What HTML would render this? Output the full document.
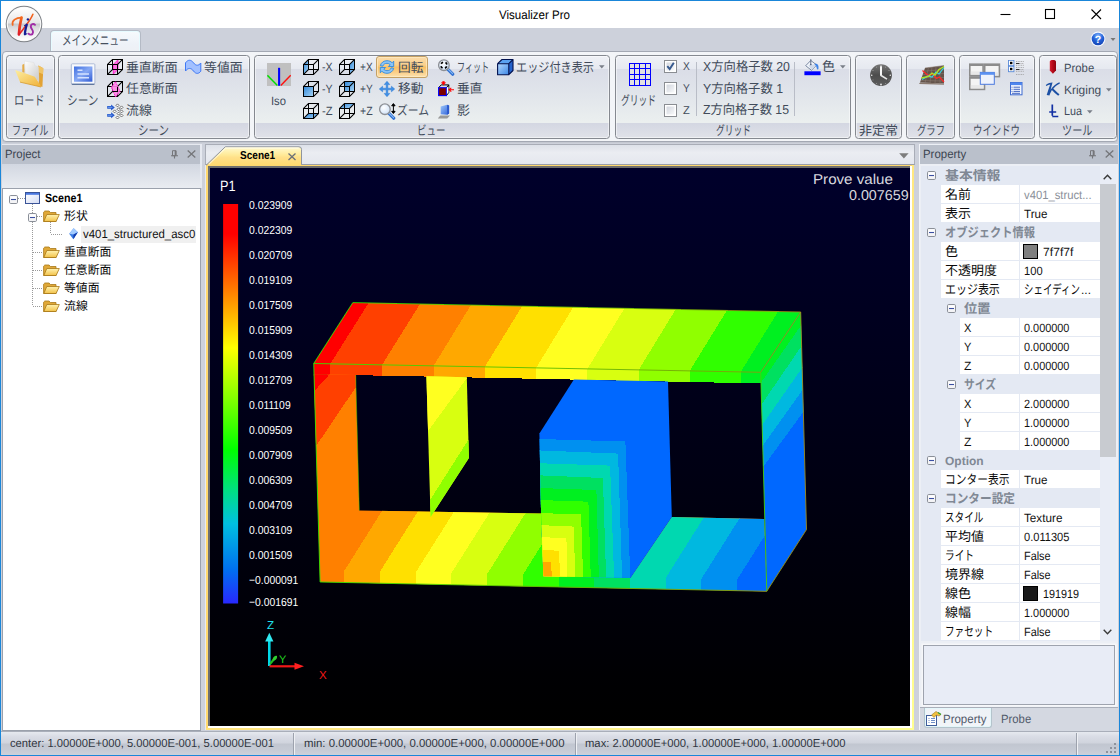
<!DOCTYPE html><html lang="ja"><head><meta charset="utf-8"><title>Visualizer Pro</title><style>
html,body{margin:0;padding:0;}
body{width:1120px;height:756px;overflow:hidden;position:relative;background:#fff;font-family:"Liberation Sans",sans-serif;font-size:12px;color:#46505e;text-rendering:geometricPrecision;-webkit-font-smoothing:antialiased;}
#win{position:absolute;left:0;top:0;width:1120px;height:756px;overflow:hidden;background:#cdd1db;}
.abs,.jt,.lt,#win div,#win svg,#win span{position:absolute;}
.lt{overflow:visible;font-family:"Liberation Sans",sans-serif;text-rendering:geometricPrecision;white-space:pre;}
.jt{overflow:visible;font-family:"Liberation Sans","Noto Sans CJK JP",sans-serif;text-rendering:geometricPrecision;white-space:pre;}

#titlebar{left:1px;top:1px;width:1118px;height:27px;background:#fff;}
#tabrow{left:1px;top:28px;width:1118px;height:24px;background:#cdd1db;}
#ribbon{left:2px;top:51px;width:1116px;height:90.500px;border:1px solid #a3a8b3;border-radius:4px;box-sizing:border-box;background:#f3f5f8;box-shadow:0 1px 0 #c4c8d1;}
.grp{top:2.700px;height:84px;border:1px solid #858990;border-radius:3.500px;box-sizing:border-box;
 background:linear-gradient(#eff1f6 0,#e6e9f0 12.500px,#dadde7 13px,#e1e5eb 38px,#ebefef 66px,#ebefef 67px,#d4d7e2 67.500px,#e1e3e9 83px);box-shadow:inset 0 0 0 1px rgba(255,255,255,.5);}
#frameborder{left:0;top:0;width:1118px;height:754px;border:1px solid #1a86d9;pointer-events:none;}
</style></head><body><div id="win"><div id="titlebar"><svg class="lt" style="left:496.40px;top:6.27px;width:75.00px;height:16.37px"><text x="2" y="12.4" font-size="12.4" fill="#000" textLength="71.00" lengthAdjust="spacingAndGlyphs">Visualizer Pro</text></svg><svg style="left:990px;top:0;width:128px;height:27px" viewBox="991 1 128 27" stroke="#000" stroke-width="1.1" fill="none"><path d="M1000.5 14.5h10"/><rect x="1045.5" y="9.5" width="9" height="9"/><path d="M1091.5 9.5l9.5 9.5M1101 9.5l-9.5 9.5"/></svg></div><div id="tabrow"><div style="left:49px;top:2px;width:91px;height:23px;box-sizing:border-box;border:1px solid #b4bac5;border-bottom:none;border-radius:4px 4px 0 0;background:linear-gradient(#f6fafd,#eef2f8 60%,#eef0f4);box-shadow:inset 0 0 0 1px #e6fbff"></div><svg class="jt" role="img" aria-label="メインメニュー" style="left:61.00px;top:4.40px;width:68.50px;height:16.90px" viewBox="0 0 68.50 16.90" fill="#46505e"><text x="0" y="13.23" font-size="13" textLength="66.5" lengthAdjust="spacingAndGlyphs">メインメニュー</text></svg><svg style="left:1088.6px;top:2.8px;width:28px;height:16px" viewBox="0 0 28 16"><defs><radialGradient id="hg" cx=".5" cy=".25" r=".8"><stop offset="0" stop-color="#7fb4ff"/><stop offset=".5" stop-color="#2462d8"/><stop offset="1" stop-color="#123fae"/></radialGradient></defs><circle cx="8" cy="8" r="7.400" fill="#f4f7fd"/><circle cx="8" cy="8" r="6.300" fill="url(#hg)"/><text x="8" y="12" font-family="Liberation Sans" font-weight="700" font-size="10.5" fill="#fff" text-anchor="middle">?</text><path d="M20.5 7h5l-2.500 3z" fill="#777"/></svg></div><div id="ribbon"><div class="grp" style="left:2.5px;width:49.2px"></div><svg class="jt" role="img" aria-label="ファイル" style="left:8.75px;top:70.00px;width:38.50px;height:16.90px" viewBox="0 0 38.50 16.90" fill="#414b5a"><text x="0" y="13.23" font-size="13" textLength="36.5" lengthAdjust="spacingAndGlyphs">ファイル</text></svg><div class="grp" style="left:55.0px;width:192.3px"></div><svg class="jt" role="img" aria-label="シーン" style="left:135.30px;top:70.00px;width:33.00px;height:16.90px" viewBox="0 0 33.00 16.90" fill="#414b5a"><text x="0" y="13.23" font-size="13" textLength="31" lengthAdjust="spacingAndGlyphs">シーン</text></svg><div class="grp" style="left:251.4px;width:355.6px"></div><svg class="jt" role="img" aria-label="ビュー" style="left:414.45px;top:70.00px;width:30.50px;height:16.90px" viewBox="0 0 30.50 16.90" fill="#414b5a"><text x="0" y="13.23" font-size="13" textLength="28.5" lengthAdjust="spacingAndGlyphs">ビュー</text></svg><div class="grp" style="left:611.6px;width:236.7px"></div><svg class="jt" role="img" aria-label="グリッド" style="left:712.60px;top:70.00px;width:37.00px;height:16.90px" viewBox="0 0 37.00 16.90" fill="#414b5a"><text x="0" y="13.23" font-size="13" textLength="35" lengthAdjust="spacingAndGlyphs">グリッド</text></svg><div class="grp" style="left:852.3px;width:47.2px"></div><svg class="jt" role="img" aria-label="非定常" style="left:856.20px;top:70.00px;width:41.00px;height:16.90px" viewBox="0 0 41.00 16.90" fill="#414b5a"><text x="0" y="12.74" font-size="13" textLength="39" lengthAdjust="spacingAndGlyphs">非定常</text></svg><div class="grp" style="left:903.3px;width:48.7px"></div><svg class="jt" role="img" aria-label="グラフ" style="left:913.50px;top:70.00px;width:30.00px;height:16.90px" viewBox="0 0 30.00 16.90" fill="#414b5a"><text x="0" y="13.23" font-size="13" textLength="28" lengthAdjust="spacingAndGlyphs">グラフ</text></svg><div class="grp" style="left:956.2px;width:75.8px"></div><svg class="jt" role="img" aria-label="ウインドウ" style="left:970.20px;top:70.00px;width:49.00px;height:16.90px" viewBox="0 0 49.00 16.90" fill="#414b5a"><text x="0" y="13.23" font-size="13" textLength="47" lengthAdjust="spacingAndGlyphs">ウインドウ</text></svg><div class="grp" style="left:1035.7px;width:78.5px"></div><svg class="jt" role="img" aria-label="ツール" style="left:1059.25px;top:70.00px;width:32.50px;height:16.90px" viewBox="0 0 32.50 16.90" fill="#414b5a"><text x="0" y="13.23" font-size="13" textLength="30.5" lengthAdjust="spacingAndGlyphs">ツール</text></svg><svg style="left:11px;top:6px;width:32px;height:32px" viewBox="0 0 32 32"><defs><linearGradient id="fo1" x1="0" y1="0" x2="1" y2="1"><stop offset="0" stop-color="#fdeea0"/><stop offset="1" stop-color="#f0b038"/></linearGradient><linearGradient id="fo2" x1="0" y1="0" x2="1" y2="1"><stop offset="0" stop-color="#ffffff"/><stop offset="1" stop-color="#c9c9c9"/></linearGradient></defs><path d="M8.300 6.700l2.200-1v9l-2.200-.500z" fill="#e4ac48"/><path d="M24.400 7.600l4.900 2.700-.9 18.700-3.600-1.300z" fill="#e2a234"/><path d="M24.400 7.600l4.900 2.700-.3 6-4.600-2z" fill="#f0c466"/><path d="M10.500 3.100l9.400 1.400 .9 3.100 3.600 1.400 .4 13.800-13.400-5.400z" fill="url(#fo2)" stroke="#d8d8d8" stroke-width=".4"/><path d="M1.100 12.100l12.100 4 7.600 2.700 5.300 8 .9 2.200-21-4.900z" fill="url(#fo1)"/><path d="M6 24.100l21 4.900" stroke="#d89a28" stroke-width=".8"/></svg><svg class="jt" role="img" aria-label="ロード" style="left:10.85px;top:39.60px;width:32.50px;height:16.90px" viewBox="0 0 32.50 16.90" fill="#414b5a"><text x="0" y="13.23" font-size="13" textLength="30.5" lengthAdjust="spacingAndGlyphs">ロード</text></svg><svg style="left:64px;top:7px;width:32px;height:32px" viewBox="0 0 32 32"><defs><linearGradient id="sc1" x1="0" y1="0" x2="1" y2="1"><stop offset="0" stop-color="#3f6fe0"/><stop offset=".5" stop-color="#86a8f4"/><stop offset="1" stop-color="#2e5ad4"/></linearGradient></defs><rect x="4.600" y="5.600" width="23" height="20.500" rx="1" fill="#34507e" opacity=".85"/><rect x="4.300" y="4.800" width="23.600" height="20" rx="1" fill="#f7f9fd" stroke="#9fb0d0" stroke-width=".8"/><rect x="7" y="7.500" width="18.400" height="15.200" fill="url(#sc1)"/><path d="M10.500 11.300h5M10.500 15h11.500M10.500 18.700h11.500" stroke="#d4e2ff" stroke-width="1.500"/></svg><svg class="jt" role="img" aria-label="シーン" style="left:63.95px;top:39.60px;width:33.50px;height:16.90px" viewBox="0 0 33.50 16.90" fill="#414b5a"><text x="0" y="13.23" font-size="13" textLength="31.5" lengthAdjust="spacingAndGlyphs">シーン</text></svg><svg style="left:104px;top:7px;width:17px;height:17px" viewBox="0 0 17 17"><path d="M6.300 5.400l4.700-4.700v9.700l-4.700 4.700z" fill="#ff74e4" stroke="#ff10c8" stroke-width=".8"/><path d="M.5 5.500h10v10h-10zM5.500 .5h10v10h-10z" fill="none" stroke="#000" stroke-width="1" shape-rendering="crispEdges"/><path d="M.6 5.400l4.800-4.800M10.600 5.400l4.800-4.800M.6 15.400l4.800-4.800M10.600 15.400l4.800-4.800" fill="none" stroke="#000" stroke-width="1.100"/></svg><svg class="jt" role="img" aria-label="垂直断面" style="left:122.70px;top:6.60px;width:53.60px;height:16.90px" viewBox="0 0 53.60 16.90" fill="#414b5a"><text x="0" y="12.74" font-size="13" textLength="51.6" lengthAdjust="spacingAndGlyphs">垂直断面</text></svg><svg style="left:104px;top:29px;width:17px;height:17px" viewBox="0 0 17 17"><path d="M.5 5.500h10v10h-10zM5.500 .5h10v10h-10z" fill="none" stroke="#000" stroke-width="1" shape-rendering="crispEdges"/><path d="M.6 5.400l4.800-4.800M10.600 5.400l4.800-4.800M.6 15.400l4.800-4.800M10.600 15.400l4.800-4.800" fill="none" stroke="#000" stroke-width="1.100"/><path d="M8.600 .8l-4.300 5.400 4.300 9.800 4.400-5.600z" fill="#ff86e6" fill-opacity=".9" stroke="#ff10c8" stroke-width=".9" stroke-dasharray="1.600 .8"/><path d="M5.500 10.500h5M10.500 5.500v5" stroke="#000" stroke-width="1" shape-rendering="crispEdges"/></svg><svg class="jt" role="img" aria-label="任意断面" style="left:122.70px;top:28.20px;width:53.60px;height:16.90px" viewBox="0 0 53.60 16.90" fill="#414b5a"><text x="0" y="12.74" font-size="13" textLength="51.6" lengthAdjust="spacingAndGlyphs">任意断面</text></svg><svg style="left:104px;top:51px;width:17px;height:17px" viewBox="0 0 17 17"><path d="M.2 3.0h3.900v-1.600l3.700 3-3.700 3v-1.600h-3.900z" fill="#2458cc"/><path d="M.9 4.300h4.500" stroke="#7eaaf2" stroke-width=".9"/><path d="M.2 10.900h3.900v-1.600l3.700 3-3.700 3v-1.600h-3.900z" fill="#2458cc"/><path d="M.9 12.200h4.500" stroke="#7eaaf2" stroke-width=".9"/><path d="M10.500 0.900l1.500 1.500-1.500 1.500-1.500-1.500z" fill="#fff" stroke="#3c3c3c" stroke-width=".7"/><path d="M14.500 2.900l1.500 1.500-1.500 1.500-1.500-1.500z" fill="#fff" stroke="#3c3c3c" stroke-width=".7"/><path d="M11.600 4.800l1.500 1.500-1.500 1.500-1.500-1.500z" fill="#fff" stroke="#3c3c3c" stroke-width=".7"/><path d="M7.600 6.900l1.500 1.500-1.500 1.500-1.500-1.500z" fill="#fff" stroke="#3c3c3c" stroke-width=".7"/><path d="M14.500 6.900l1.500 1.500-1.500 1.500-1.500-1.500z" fill="#fff" stroke="#3c3c3c" stroke-width=".7"/><path d="M11.600 9.100l1.500 1.500-1.500 1.500-1.500-1.500z" fill="#fff" stroke="#3c3c3c" stroke-width=".7"/><path d="M14.500 11.0l1.500 1.500-1.500 1.500-1.500-1.500z" fill="#fff" stroke="#3c3c3c" stroke-width=".7"/><path d="M10.500 13.0l1.500 1.500-1.500 1.500-1.500-1.500z" fill="#fff" stroke="#3c3c3c" stroke-width=".7"/></svg><svg class="jt" role="img" aria-label="流線" style="left:122.70px;top:50.20px;width:27.80px;height:16.90px" viewBox="0 0 27.80 16.90" fill="#414b5a"><text x="0" y="12.74" font-size="13" textLength="25.8" lengthAdjust="spacingAndGlyphs">流線</text></svg><svg style="left:182px;top:7px;width:17px;height:17px" viewBox="0 0 17 17"><path d="M.5 3.800c2.500-3.400 5.500-3.400 8 0s5.200 2.900 7.300 .2v8.200c-2.100 2.700-4.800 3.200-7.300-.2s-5.500-3.400-8 0z" fill="#a2c0ff" stroke="#3f78f4" stroke-width="1"/></svg><svg class="jt" role="img" aria-label="等値面" style="left:200.70px;top:6.60px;width:40.70px;height:16.90px" viewBox="0 0 40.70 16.90" fill="#414b5a"><text x="0" y="12.74" font-size="13" textLength="38.7" lengthAdjust="spacingAndGlyphs">等値面</text></svg><svg style="left:264px;top:11px;width:24px;height:23px" viewBox="0 0 24 23"><rect width="24" height="23" fill="#c0c0c0"/><path d="M.4 12.300l10 10.200" stroke="#00e000" stroke-width="1.400"/><path d="M23.700 12.300l-9.900 10.200" stroke="#ff1010" stroke-width="1.400"/><path d="M12.100 4.800v18" stroke="#0000ff" stroke-width="2.100"/></svg><svg class="lt" style="left:265.70px;top:41.33px;width:19.00px;height:15.84px"><text x="2" y="12" font-size="12" fill="#414b5a" textLength="15.00" lengthAdjust="spacingAndGlyphs">Iso</text></svg><svg style="left:300px;top:7px;width:16px;height:16px" viewBox="0 0 16 16"><defs><linearGradient id="cgmx" x1="0" y1="0" x2="1" y2="1"><stop offset="0" stop-color="#2f86d8"/><stop offset="1" stop-color="#aad6f6"/></linearGradient></defs><path d="M.5 5.500l5-5v10l-5 5z" fill="url(#cgmx)"/><path d="M.5 5.500h10v10h-10zM5.500 .5h10v10h-10z" fill="none" stroke="#000" stroke-width="1" shape-rendering="crispEdges"/><path d="M.6 5.400l4.800-4.800M10.600 5.400l4.800-4.800M.6 15.400l4.800-4.800M10.600 15.400l4.800-4.800" fill="none" stroke="#000" stroke-width="1.100"/></svg><svg class="lt" style="left:317.30px;top:7.43px;width:14.60px;height:15.84px"><text x="2" y="12" font-size="12" fill="#414b5a" textLength="10.60" lengthAdjust="spacingAndGlyphs">-X</text></svg><svg style="left:300px;top:29px;width:16px;height:16px" viewBox="0 0 16 16"><defs><linearGradient id="cgmy" x1="0" y1="0" x2="1" y2="1"><stop offset="0" stop-color="#2f86d8"/><stop offset="1" stop-color="#aad6f6"/></linearGradient></defs><path d="M.5 5.500h10v10h-10zM5.500 .5h10v10h-10z" fill="none" stroke="#000" stroke-width="1" shape-rendering="crispEdges"/><path d="M.6 5.400l4.800-4.800M10.600 5.400l4.800-4.800M.6 15.400l4.800-4.800M10.600 15.400l4.800-4.800" fill="none" stroke="#000" stroke-width="1.100"/><path d="M.5 5.500h10v10h-10z" fill="url(#cgmy)"/><path d="M.5 5.500h10v10h-10z" fill="none" stroke="#000" stroke-width="1" shape-rendering="crispEdges"/></svg><svg class="lt" style="left:317.30px;top:29.03px;width:14.60px;height:15.84px"><text x="2" y="12" font-size="12" fill="#414b5a" textLength="10.60" lengthAdjust="spacingAndGlyphs">-Y</text></svg><svg style="left:300px;top:51px;width:16px;height:16px" viewBox="0 0 16 16"><defs><linearGradient id="cgmz" x1="0" y1="0" x2="1" y2="1"><stop offset="0" stop-color="#2f86d8"/><stop offset="1" stop-color="#aad6f6"/></linearGradient></defs><path d="M.5 15.500l5-5h10l-5 5z" fill="url(#cgmz)"/><path d="M.5 5.500h10v10h-10zM5.500 .5h10v10h-10z" fill="none" stroke="#000" stroke-width="1" shape-rendering="crispEdges"/><path d="M.6 5.400l4.800-4.800M10.600 5.400l4.800-4.800M.6 15.400l4.800-4.800M10.600 15.400l4.800-4.800" fill="none" stroke="#000" stroke-width="1.100"/></svg><svg class="lt" style="left:317.30px;top:51.03px;width:14.60px;height:15.84px"><text x="2" y="12" font-size="12" fill="#414b5a" textLength="10.60" lengthAdjust="spacingAndGlyphs">-Z</text></svg><svg style="left:336px;top:7px;width:16px;height:16px" viewBox="0 0 16 16"><defs><linearGradient id="cgpx" x1="0" y1="0" x2="1" y2="1"><stop offset="0" stop-color="#2f86d8"/><stop offset="1" stop-color="#aad6f6"/></linearGradient></defs><path d="M10.500 5.500l5-5v10l-5 5z" fill="url(#cgpx)"/><path d="M.5 5.500h10v10h-10zM5.500 .5h10v10h-10z" fill="none" stroke="#000" stroke-width="1" shape-rendering="crispEdges"/><path d="M.6 5.400l4.800-4.800M10.600 5.400l4.800-4.800M.6 15.400l4.800-4.800M10.600 15.400l4.800-4.800" fill="none" stroke="#000" stroke-width="1.100"/></svg><svg class="lt" style="left:354.60px;top:7.43px;width:16.60px;height:15.84px"><text x="2" y="12" font-size="12" fill="#414b5a" textLength="12.60" lengthAdjust="spacingAndGlyphs">+X</text></svg><svg style="left:336px;top:29px;width:16px;height:16px" viewBox="0 0 16 16"><defs><linearGradient id="cgpy" x1="0" y1="0" x2="1" y2="1"><stop offset="0" stop-color="#2f86d8"/><stop offset="1" stop-color="#aad6f6"/></linearGradient></defs><path d="M5.500 .5h10v10h-10z" fill="url(#cgpy)"/><path d="M.5 5.500h10v10h-10zM5.500 .5h10v10h-10z" fill="none" stroke="#000" stroke-width="1" shape-rendering="crispEdges"/><path d="M.6 5.400l4.800-4.800M10.600 5.400l4.800-4.800M.6 15.400l4.800-4.800M10.600 15.400l4.800-4.800" fill="none" stroke="#000" stroke-width="1.100"/></svg><svg class="lt" style="left:354.60px;top:29.03px;width:16.60px;height:15.84px"><text x="2" y="12" font-size="12" fill="#414b5a" textLength="12.60" lengthAdjust="spacingAndGlyphs">+Y</text></svg><svg style="left:336px;top:51px;width:16px;height:16px" viewBox="0 0 16 16"><defs><linearGradient id="cgpz" x1="0" y1="0" x2="1" y2="1"><stop offset="0" stop-color="#2f86d8"/><stop offset="1" stop-color="#aad6f6"/></linearGradient></defs><path d="M.5 5.500l5-5h10l-5 5z" fill="url(#cgpz)"/><path d="M.5 5.500h10v10h-10zM5.500 .5h10v10h-10z" fill="none" stroke="#000" stroke-width="1" shape-rendering="crispEdges"/><path d="M.6 5.400l4.800-4.800M10.600 5.400l4.800-4.800M.6 15.400l4.800-4.800M10.600 15.400l4.800-4.800" fill="none" stroke="#000" stroke-width="1.100"/></svg><svg class="lt" style="left:354.60px;top:51.03px;width:16.60px;height:15.84px"><text x="2" y="12" font-size="12" fill="#414b5a" textLength="12.60" lengthAdjust="spacingAndGlyphs">+Z</text></svg><div style="left:373.0px;top:4.0px;width:52px;height:22px;box-sizing:border-box;border:1px solid #c4a064;border-radius:3px;background:linear-gradient(#fbdcaa,#fad08c 40%,#f9c166 52%,#fbd08a 78%,#fde2b0);box-shadow:inset 0 0 0 1px rgba(255,236,196,.7)"></div><svg style="left:376px;top:7px;width:16px;height:16px" viewBox="0 0 16 16"><path d="M1.300 6.700c.8-3.300 3.600-5 6.700-5 2.200 0 3.900 .8 5.100 2.100l1.600-1.600v5.300h-5.300l1.800-1.800c-.9-.9-1.900-1.400-3.200-1.400-2 0-3.600 1-4.300 2.900z" fill="#8cc4f6" stroke="#2f8ae0" stroke-width=".9" stroke-linejoin="round"/><path d="M14.700 9.300c-.8 3.300-3.600 5-6.700 5-2.200 0-3.900-.8-5.100-2.100l-1.600 1.600v-5.300h5.300l-1.800 1.800c.9 .9 1.900 1.400 3.200 1.400 2 0 3.600-1 4.300-2.900z" fill="#8cc4f6" stroke="#2f8ae0" stroke-width=".9" stroke-linejoin="round"/></svg><svg class="jt" role="img" aria-label="回転" style="left:394.90px;top:6.60px;width:27.40px;height:16.90px" viewBox="0 0 27.40 16.90" fill="#414b5a"><text x="0" y="12.74" font-size="13" textLength="25.4" lengthAdjust="spacingAndGlyphs">回転</text></svg><svg style="left:376px;top:29px;width:16px;height:16px" viewBox="0 0 16 16"><path d="M8 .3l2.800 3.300h-2v3.600h3.600v-2l3.300 2.800-3.300 2.800v-2h-3.600v3.600h2l-2.800 3.300-2.800-3.300h2v-3.600h-3.600v2l-3.300-2.800 3.300-2.800v2h3.600v-3.600h-2z" fill="#3f8fe6" stroke="#2a78d4" stroke-width=".5" stroke-linejoin="round"/></svg><svg class="jt" role="img" aria-label="移動" style="left:394.90px;top:28.20px;width:27.40px;height:16.90px" viewBox="0 0 27.40 16.90" fill="#414b5a"><text x="0" y="12.74" font-size="13" textLength="25.4" lengthAdjust="spacingAndGlyphs">移動</text></svg><svg style="left:376px;top:51px;width:17px;height:17px" viewBox="0 0 17 17"><defs><radialGradient id="mg" cx=".4" cy=".35" r=".7"><stop offset="0" stop-color="#ffffff"/><stop offset="1" stop-color="#cfe2f8"/></radialGradient></defs><path d="M9.700 10.200l5 5" stroke="#2f6fd0" stroke-width="3.200" stroke-linecap="round"/><path d="M10 10l4.600 4.600" stroke="#86b8f4" stroke-width="1.100" stroke-linecap="round"/><circle cx="5.900" cy="6.200" r="5.300" fill="url(#mg)" stroke="#8d9096" stroke-width="1.300"/><path d="M14.400 1.500v8M14.400 .6l-1.700 2.200h3.400zM14.400 10.500l-1.700-2.200h3.400z" stroke="#000" stroke-width="1" fill="#000"/></svg><svg class="jt" role="img" aria-label="ズーム" style="left:394.00px;top:50.20px;width:34.00px;height:16.90px" viewBox="0 0 34.00 16.90" fill="#414b5a"><text x="0" y="13.23" font-size="13" textLength="32" lengthAdjust="spacingAndGlyphs">ズーム</text></svg><svg style="left:435px;top:7px;width:17px;height:17px" viewBox="0 0 17 17"><defs><radialGradient id="mg" cx=".4" cy=".35" r=".7"><stop offset="0" stop-color="#ffffff"/><stop offset="1" stop-color="#cfe2f8"/></radialGradient></defs><path d="M9.700 10.200l5 5" stroke="#2f6fd0" stroke-width="3.200" stroke-linecap="round"/><path d="M10 10l4.600 4.600" stroke="#86b8f4" stroke-width="1.100" stroke-linecap="round"/><circle cx="5.900" cy="6.200" r="5.300" fill="url(#mg)" stroke="#8d9096" stroke-width="1.300"/><circle cx="5.900" cy="6.200" r="3.100" fill="none" stroke="#000" stroke-width="1.700" stroke-dasharray="2.400 2.470" stroke-dashoffset="-1.250"/></svg><svg class="jt" role="img" aria-label="フィット" style="left:453.50px;top:6.60px;width:34.00px;height:16.90px" viewBox="0 0 34.00 16.90" fill="#414b5a"><text x="0" y="13.23" font-size="13" textLength="32" lengthAdjust="spacingAndGlyphs">フィット</text></svg><svg style="left:435px;top:29px;width:17px;height:17px" viewBox="0 0 17 17"><path d="M3.200 3.900h7.600v7.600M.6 6.700l2.600-2.800M8.400 6.700l2.400-2.800M8.400 14.600l2.400-3.100" stroke="#000" stroke-width="1" fill="none"/><rect x=".6" y="6.700" width="7.800" height="7.900" fill="#7c0000" stroke="#0000ff" stroke-width="1.100"/><path d="M8.900 7.500l1.500-1.800v5.300l-1.500 2z" fill="#fff"/><path d="M5.500 .2v4M3.300 1.800h4.400M4 .6l3 2.400M7 .6l-3 2.400" stroke="#ff0000" stroke-width="1"/><path d="M16 8.700h-5M13.300 6.800l-2.300 1.900 2.300 1.900" stroke="#ff0000" stroke-width="1.100" fill="none"/></svg><svg class="jt" role="img" aria-label="垂直" style="left:453.50px;top:28.20px;width:27.40px;height:16.90px" viewBox="0 0 27.40 16.90" fill="#414b5a"><text x="0" y="12.74" font-size="13" textLength="25.4" lengthAdjust="spacingAndGlyphs">垂直</text></svg><svg style="left:435px;top:51px;width:17px;height:17px" viewBox="0 0 17 17"><defs><linearGradient id="sh1" x1="0" y1="0" x2="1" y2="1"><stop offset="0" stop-color="#9cc6fa"/><stop offset="1" stop-color="#2f62d8"/></linearGradient></defs><path d="M2.300 12.400h9.700l-2.800 3.100h-9.400z" fill="#8a8a8a" opacity=".85"/><path d="M2.700 3.400l6.400-1.600 2 .7v8l-2 1.200-6.400-.5z" fill="url(#sh1)"/><path d="M9.100 1.800l2 .7v8l-2 1.200z" fill="#2a58cc"/></svg><svg class="jt" role="img" aria-label="影" style="left:454.00px;top:50.20px;width:15.00px;height:16.90px" viewBox="0 0 15.00 16.90" fill="#414b5a"><text x="0" y="12.74" font-size="13" textLength="13" lengthAdjust="spacingAndGlyphs">影</text></svg><svg style="left:494px;top:7px;width:17px;height:17px" viewBox="0 0 17 17"><defs><linearGradient id="ec1" x1="0" y1="0" x2="1" y2="1"><stop offset="0" stop-color="#b6daff"/><stop offset="1" stop-color="#3a86e6"/></linearGradient></defs><path d="M.6 4.700h11.200v11h-11.200z" fill="url(#ec1)"/><path d="M.6 4.700l4.400-4.200h11l-4.200 4.200z" fill="#5aa2f2"/><path d="M11.800 4.700l4.200-4.200v11l-4.200 4.200z" fill="#2462cc"/><path d="M.6 4.700h11.200v11h-11.200zM.6 4.700l4.400-4.200h11l-4.200 4.200M16 .5v11l-4.200 4.200" fill="none" stroke="#00104e" stroke-width="1.100" stroke-linejoin="round"/></svg><svg class="jt" role="img" aria-label="エッジ付き表示" style="left:512.50px;top:6.60px;width:80.00px;height:16.90px" viewBox="0 0 80.00 16.90" fill="#414b5a"><text x="0" y="12.9" font-size="13" textLength="78" lengthAdjust="spacingAndGlyphs">エッジ付き表示</text></svg><svg style="left:596px;top:13px;width:6px;height:4px" viewBox="0 0 6 4"><path d="M0 .3h5.600L2.800 3.400z" fill="#7a7f88"/></svg><svg style="left:626px;top:11px;width:24px;height:24px" viewBox="0 0 24 24"><rect x="0" y="0" width="22" height="23" fill="#e2e2e2"/><path d="M.5 0v23M5.500 0v23M10.500 0v23M16.500 0v23M21.500 0v23M0 .5h22M0 5.500h22M0 11.500h22M0 16.500h22M0 22.500h22" stroke="#0000ff" stroke-width="1" shape-rendering="crispEdges"/></svg><svg class="jt" role="img" aria-label="グリッド" style="left:617.70px;top:39.60px;width:37.00px;height:16.90px" viewBox="0 0 37.00 16.90" fill="#414b5a"><text x="0" y="13.23" font-size="13" textLength="35" lengthAdjust="spacingAndGlyphs">グリッド</text></svg><svg style="left:661px;top:8px;width:13px;height:13px" viewBox="0 0 13 13"><defs><linearGradient id="cb1" x1="0" y1="0" x2="1" y2="1"><stop offset="0" stop-color="#d2d6de"/><stop offset="1" stop-color="#f8f9fa"/></linearGradient></defs><rect x=".5" y=".5" width="12" height="12" fill="#fff" stroke="#8a8d92"/><rect x="2.500" y="2.500" width="8" height="8" fill="url(#cb1)"/><path d="M3.300 6.200l2.400 2.900 4.100-6.300" fill="none" stroke="#36598e" stroke-width="1.900"/></svg><svg class="lt" style="left:677.70px;top:7.49px;width:10.80px;height:14.92px"><text x="2" y="11.3" font-size="11.3" fill="#414b5a" textLength="6.80" lengthAdjust="spacingAndGlyphs">X</text></svg><svg style="left:661px;top:30px;width:13px;height:13px" viewBox="0 0 13 13"><defs><linearGradient id="cb1" x1="0" y1="0" x2="1" y2="1"><stop offset="0" stop-color="#d2d6de"/><stop offset="1" stop-color="#f8f9fa"/></linearGradient></defs><rect x=".5" y=".5" width="12" height="12" fill="#fff" stroke="#8a8d92"/><rect x="2.500" y="2.500" width="8" height="8" fill="url(#cb1)"/></svg><svg class="lt" style="left:677.70px;top:29.49px;width:10.80px;height:14.92px"><text x="2" y="11.3" font-size="11.3" fill="#414b5a" textLength="6.80" lengthAdjust="spacingAndGlyphs">Y</text></svg><svg style="left:661px;top:52px;width:13px;height:13px" viewBox="0 0 13 13"><defs><linearGradient id="cb1" x1="0" y1="0" x2="1" y2="1"><stop offset="0" stop-color="#d2d6de"/><stop offset="1" stop-color="#f8f9fa"/></linearGradient></defs><rect x=".5" y=".5" width="12" height="12" fill="#fff" stroke="#8a8d92"/><rect x="2.500" y="2.500" width="8" height="8" fill="url(#cb1)"/></svg><svg class="lt" style="left:677.70px;top:51.49px;width:10.80px;height:14.92px"><text x="2" y="11.3" font-size="11.3" fill="#414b5a" textLength="6.80" lengthAdjust="spacingAndGlyphs">Z</text></svg><div style="left:693.0px;top:10.0px;width:1px;height:54px;background:#b9bdc7"></div><svg class="jt" role="img" aria-label="X方向格子数 20" style="left:700.10px;top:5.90px;width:89.00px;height:16.90px" viewBox="0 0 89.00 16.90" fill="#414b5a"><text x="0" y="12.74" font-size="13" textLength="87" lengthAdjust="spacingAndGlyphs">X方向格子数 20</text></svg><svg class="jt" role="img" aria-label="Y方向格子数 1" style="left:700.10px;top:27.80px;width:82.00px;height:16.90px" viewBox="0 0 82.00 16.90" fill="#414b5a"><text x="0" y="12.74" font-size="13" textLength="80" lengthAdjust="spacingAndGlyphs">Y方向格子数 1</text></svg><svg class="jt" role="img" aria-label="Z方向格子数 15" style="left:700.10px;top:49.20px;width:88.00px;height:16.90px" viewBox="0 0 88.00 16.90" fill="#414b5a"><text x="0" y="12.74" font-size="13" textLength="86" lengthAdjust="spacingAndGlyphs">Z方向格子数 15</text></svg><div style="left:791.3px;top:10.0px;width:1px;height:54px;background:#b9bdc7"></div><svg style="left:800.5px;top:6.5px;width:17px;height:17px" viewBox="0 0 17 17"><rect x=".4" y="12.300" width="16.200" height="3.900" fill="#0000ff"/><path d="M6.800 1.500l6 4.600-5.300 5.200-5.800-4.600z" fill="#f4f7fc" stroke="#5a6c8c" stroke-width=".8"/><path d="M4.300 5.900l6.300-.6 2.200 .8-5.300 5.200z" fill="#d0daea"/><path d="M6.800 .2v5.300" stroke="#4a5a78" stroke-width=".9"/><ellipse cx="6.800" cy="5.600" rx=".9" ry=".7" fill="#4a5a78"/><path d="M11.500 4.600c2.200 .3 3.300 1.600 3 4.900-.2 1.300-1.500 1.300-1.700 0-.3-2-.9-3.300-2.300-4z" fill="#3f84e8"/></svg><svg class="jt" role="img" aria-label="色" style="left:819.10px;top:6.40px;width:15.00px;height:16.90px" viewBox="0 0 15.00 16.90" fill="#414b5a"><text x="0" y="12.74" font-size="13" textLength="13" lengthAdjust="spacingAndGlyphs">色</text></svg><svg style="left:837px;top:13px;width:6px;height:4px" viewBox="0 0 6 4"><path d="M0 .3h5.600L2.800 3.400z" fill="#7a7f88"/></svg><svg style="left:867px;top:11.5px;width:22px;height:22.5px" viewBox="0 0 22 22.5"><defs><linearGradient id="ck1" x1="0" y1="0" x2="0" y2="1"><stop offset="0" stop-color="#767676"/><stop offset=".5" stop-color="#4c4c4c"/><stop offset="1" stop-color="#5e5e5e"/></linearGradient></defs><circle cx="11" cy="11.200" r="10.900" fill="url(#ck1)"/><path d="M11 11.800v-9.600" stroke="#fff" stroke-width="1.900"/><path d="M10.700 11.200l6.300 3.900" stroke="#e8e8e8" stroke-width="1.700"/><g fill="#e8e8e8"><circle cx="11" cy="1.900" r=".7"/><circle cx="11" cy="20.500" r=".9"/><circle cx="1.700" cy="11.200" r=".8"/><circle cx="20.300" cy="11.200" r=".8"/><circle cx="15.600" cy="3.100" r=".4"/><circle cx="19" cy="6.500" r=".4"/><circle cx="6.400" cy="3.100" r=".4"/><circle cx="3" cy="6.500" r=".4"/><circle cx="3" cy="15.900" r=".4"/><circle cx="6.400" cy="19.300" r=".4"/><circle cx="15.600" cy="19.300" r=".4"/><circle cx="19" cy="15.900" r=".4"/></g></svg><svg style="left:914.5px;top:11px;width:28px;height:24px" viewBox="0 0 28 24"><path d="M2 19.500l5-14.500 19-2.500v18z" fill="#63534a"/><path d="M2 19.500l24 1v1.300l-25-.8z" fill="#8a7a70"/><g stroke="#8c7d73" stroke-width=".5"><path d="M7 5l19-2.500M6 8.200l20-1.700M5 11.500l21-1M4 14.500h22M3 17.500l23 .5M10.500 4.500l-3.500 15.500M14 4l-2 16M18 3.500l-1 17M22 3l0 18"/></g><path d="M4.500 7.500l5.500 5 4.500-1.500 4 4.500 3-1.500 4.500 5" stroke="#ff2828" stroke-width="1.300" fill="none"/><path d="M4 16.500l6-3.500 4 1 4-5 3 2 5-6.500" stroke="#30d8e8" stroke-width="1.200" fill="none"/><path d="M3.500 15l7-1.500 3.500-3.500 3 2 4-5.500 5-3" stroke="#b4e020" stroke-width="1.300" fill="none"/></svg><svg style="left:965.5px;top:10.5px;width:32px;height:28px" viewBox="0 0 32 28"><rect x="0" y="0.4" width="14.9" height="13" fill="#8c8c8c"/><rect x="1.6" y="3" width="11.7" height="8.8" fill="#f4f4f4"/><rect x="1.6" y="8.4" width="11.7" height="3.4" fill="#e0e0e0" opacity=".6"/><rect x="14.9" y="0.4" width="16.3" height="14" fill="#8c8c8c"/><rect x="16.5" y="3" width="13.1" height="9.8" fill="#f4f4f4"/><rect x="16.5" y="9.4" width="13.1" height="3.4" fill="#e0e0e0" opacity=".6"/><rect x="0" y="13.2" width="16.3" height="14" fill="#8c8c8c"/><rect x="1.6" y="15.8" width="13.1" height="9.8" fill="#f4f4f4"/><rect x="1.6" y="22.2" width="13.1" height="3.4" fill="#e0e0e0" opacity=".6"/><rect x="11.300" y="9.400" width="14" height="11.900" fill="#eef2fc" stroke="#4a7ade" stroke-width="1"/><rect x="11.300" y="9.400" width="14" height="2.400" fill="#5c92f2"/></svg><svg style="left:1005px;top:8px;width:17px;height:16px" viewBox="0 0 17 16"><rect x=".5" y="0.3" width="5.400" height="5.400" fill="#fff" stroke="#5a8ad8" stroke-width=".9"/><rect x="2" y="1.8" width="2.400" height="2.400" fill="#000"/><path d="M8 3.500h3.500" stroke="#333" stroke-width="1"/><path d="M8 1.500h8M12.500 3.500h3.500M8 5.300h8" stroke="#9a9a9a" stroke-width=".8" stroke-dasharray="1 .7"/><rect x=".5" y="6.300" width="5.400" height="5.400" fill="#fff" stroke="#5a8ad8" stroke-width=".9"/><rect x="2" y="7.800" width="2.400" height="2.400" fill="#000"/><path d="M8 9.500h3.500" stroke="#333" stroke-width="1"/><path d="M8 7.500h8M12.500 9.500h3.500M8 11.300h8" stroke="#9a9a9a" stroke-width=".8" stroke-dasharray="1 .7"/><path d="M8 14.500h8" stroke="#9a9a9a" stroke-width=".8" stroke-dasharray="1 .7"/></svg><svg style="left:1006.5px;top:29.5px;width:13px;height:14px" viewBox="0 0 13 14"><rect x=".5" y=".5" width="11.500" height="12.300" fill="#f4f7fe" stroke="#3e6ad0" stroke-width="1"/><rect x=".5" y=".5" width="11.500" height="2.600" fill="#4f86ee"/><path d="M3.500 5.200h6.500M3.500 7.300h6.500M3.500 9.400h6.500M2 11.300h8" stroke="#2f55b8" stroke-width=".9"/><path d="M1.500 5.200h1M1.500 7.300h1M1.500 9.400h1" stroke="#2f55b8" stroke-width=".9"/></svg><svg style="left:1043px;top:7px;width:14px;height:16px" viewBox="0 0 14 16"><defs><linearGradient id="pr1" x1="0" y1="0" x2="1" y2="0"><stop offset="0" stop-color="#d42030"/><stop offset=".5" stop-color="#b40818"/><stop offset="1" stop-color="#8c0410"/></linearGradient></defs><path d="M3.800 2.800c0-1.400 1.100-1.900 3.100-1.900s3.100 .5 3.100 1.900v8.600l-3.100 3.300-3.100-3.300z" fill="url(#pr1)"/></svg><svg class="lt" style="left:1059.20px;top:7.53px;width:34.20px;height:15.84px"><text x="2" y="12" font-size="12" fill="#414b5a" textLength="30.20" lengthAdjust="spacingAndGlyphs">Probe</text></svg><svg style="left:1042px;top:29px;width:16px;height:16px" viewBox="0 0 16 16"><path d="M.8 3.900c2.500-1.600 5-2.400 6.700-2.300l-1.900 7.200c2.400-3.500 5.300-6.300 8.800-7.600l.5 1.200c-3.200 1.500-5.300 3.500-6.600 5.300 1.900 1.700 4 4 6.200 5.500l-1.300 1.600c-2.400-1.700-4.500-3.800-6.300-5.700-1 1.600-1.900 3.600-2.500 5.500l-2.700-.5c1-3.600 2.300-7.300 3.500-10.600-1.200 .2-2.600 .800-3.900 1.500z" fill="#1b4fa4"/></svg><svg class="lt" style="left:1059.20px;top:29.53px;width:41.20px;height:15.84px"><text x="2" y="12" font-size="12" fill="#414b5a" textLength="37.20" lengthAdjust="spacingAndGlyphs">Kriging</text></svg><svg style="left:1103px;top:36px;width:6px;height:4px" viewBox="0 0 6 4"><path d="M0 .3h5.600L2.800 3.400z" fill="#7a7f88"/></svg><svg style="left:1043px;top:51px;width:14px;height:16px" viewBox="0 0 14 16"><path d="M6.300 1.400v11.300M3.200 9h7M6.300 13.500h6" stroke="#1230a4" stroke-width="1.700" fill="none"/></svg><svg class="lt" style="left:1059.20px;top:51.43px;width:22.00px;height:15.84px"><text x="2" y="12" font-size="12" fill="#414b5a" textLength="18.00" lengthAdjust="spacingAndGlyphs">Lua</text></svg><svg style="left:1084px;top:58px;width:6px;height:4px" viewBox="0 0 6 4"><path d="M0 .3h5.600L2.800 3.400z" fill="#7a7f88"/></svg></div><div id="project" style="left:1px;top:144px;width:201px;height:587px"><div style="left:1px;top:0;width:200.300px;height:44px;background:#e6e9f0"></div><div style="left:1px;top:1.300px;width:197.900px;height:18.400px;background:#bac0cb"></div><svg class="lt" style="left:2.00px;top:2.13px;width:39.40px;height:15.84px"><text x="2" y="12" font-size="12" fill="#3c4450" textLength="35.40" lengthAdjust="spacingAndGlyphs">Project</text></svg><svg style="left:169.1px;top:6px;width:9px;height:9px" viewBox="0 0 9 9"><path d="M2.500 .7h3.500v5h-3.500z" fill="none" stroke="#75767a" stroke-width="1"/><path d="M5.500 .7v5" stroke="#75767a" stroke-width="1.600"/><path d="M1 5.700h7M4.500 6v2.400" stroke="#75767a" stroke-width="1.100" fill="none"/></svg><svg style="left:185.5px;top:6px;width:9px;height:8px" viewBox="0 0 9 8"><path d="M.7 .5l7.600 7M8.300 .5l-7.600 7" stroke="#75767a" stroke-width="1.300"/></svg><div style="left:1px;top:19.700px;width:197.900px;height:24.300px;background:linear-gradient(#d2d7e1,#e9ecf1)"></div><div style="left:1px;top:43.500px;width:199px;height:543px;background:#fff;border:1px solid #9ba1ac;box-sizing:border-box"></div><svg style="left:0;top:44px;width:200px;height:130px" viewBox="1 188 200 130" fill="none" stroke="#9a9a9a" stroke-width="1" stroke-dasharray="1 1" shape-rendering="crispEdges"><path d="M18 198.500h7M32.500 204v102M37 216.500h6M32.500 252.500h10M32.500 270.500h10M32.500 288.500h10M32.500 306.500h10M50.500 222v12M50.500 234.500h12"/></svg><svg style="left:8px;top:51px;width:9px;height:9px" viewBox="0 0 9 9"><rect x=".5" y=".5" width="8" height="8" rx="1.200" fill="#f4f4f6" stroke="#8a8f98"/><rect x="1.500" y="1.500" width="6" height="3" fill="#fff"/><path d="M2 4.500h5" stroke="#3b4fa2" stroke-width="1.100"/></svg><svg style="left:27px;top:69px;width:9px;height:9px" viewBox="0 0 9 9"><rect x=".5" y=".5" width="8" height="8" rx="1.200" fill="#f4f4f6" stroke="#8a8f98"/><rect x="1.500" y="1.500" width="6" height="3" fill="#fff"/><path d="M2 4.500h5" stroke="#3b4fa2" stroke-width="1.100"/></svg><svg style="left:24px;top:48px;width:15px;height:12px" viewBox="0 0 15 12"><defs><linearGradient id="tsc" x1="0" y1="0" x2="1" y2="1"><stop offset="0" stop-color="#ffffff"/><stop offset="1" stop-color="#d4dcf4"/></linearGradient></defs><rect x=".5" y=".5" width="14" height="11" fill="url(#tsc)" stroke="#3a5498"/><rect x="1" y="1" width="13" height="1.800" fill="#4a78e0"/></svg><svg class="lt" style="left:41.60px;top:45.93px;width:41.40px;height:15.84px"><text x="2" y="12" font-size="12" font-weight="700" fill="#000" textLength="37.40" lengthAdjust="spacingAndGlyphs">Scene1</text></svg><svg style="left:42px;top:65px;width:17px;height:14px" viewBox="0 0 17 14"><defs><linearGradient id="tf1" x1="0" y1="0" x2="0" y2="1"><stop offset="0" stop-color="#fff2b0"/><stop offset="1" stop-color="#f2c24a"/></linearGradient></defs><path d="M.6 12.500v-9.300l1.200-1.200h4.300l1.200 1.500h5.700v9z" fill="#e0a838" stroke="#a87818" stroke-width=".8"/><path d="M.8 12.500l3-7h12.500l-3.200 7z" fill="url(#tf1)" stroke="#a87818" stroke-width=".8" stroke-linejoin="round"/></svg><svg class="jt" role="img" aria-label="形状" style="left:62.70px;top:63.90px;width:25.80px;height:15.60px" viewBox="0 0 25.80 15.60" fill="#0a0a0a"><text x="0" y="11.76" font-size="12" textLength="23.8" lengthAdjust="spacingAndGlyphs">形状</text></svg><svg style="left:42px;top:101px;width:17px;height:14px" viewBox="0 0 17 14"><defs><linearGradient id="tf1" x1="0" y1="0" x2="0" y2="1"><stop offset="0" stop-color="#fff2b0"/><stop offset="1" stop-color="#f2c24a"/></linearGradient></defs><path d="M.6 12.500v-9.300l1.200-1.200h4.300l1.200 1.500h5.700v9z" fill="#e0a838" stroke="#a87818" stroke-width=".8"/><path d="M.8 12.500l3-7h12.500l-3.200 7z" fill="url(#tf1)" stroke="#a87818" stroke-width=".8" stroke-linejoin="round"/></svg><svg class="jt" role="img" aria-label="垂直断面" style="left:62.70px;top:99.90px;width:49.40px;height:15.60px" viewBox="0 0 49.40 15.60" fill="#0a0a0a"><text x="0" y="11.76" font-size="12" textLength="47.4" lengthAdjust="spacingAndGlyphs">垂直断面</text></svg><svg style="left:42px;top:119px;width:17px;height:14px" viewBox="0 0 17 14"><defs><linearGradient id="tf1" x1="0" y1="0" x2="0" y2="1"><stop offset="0" stop-color="#fff2b0"/><stop offset="1" stop-color="#f2c24a"/></linearGradient></defs><path d="M.6 12.500v-9.300l1.200-1.200h4.300l1.200 1.500h5.700v9z" fill="#e0a838" stroke="#a87818" stroke-width=".8"/><path d="M.8 12.500l3-7h12.500l-3.200 7z" fill="url(#tf1)" stroke="#a87818" stroke-width=".8" stroke-linejoin="round"/></svg><svg class="jt" role="img" aria-label="任意断面" style="left:62.70px;top:117.90px;width:49.40px;height:15.60px" viewBox="0 0 49.40 15.60" fill="#0a0a0a"><text x="0" y="11.76" font-size="12" textLength="47.4" lengthAdjust="spacingAndGlyphs">任意断面</text></svg><svg style="left:42px;top:137px;width:17px;height:14px" viewBox="0 0 17 14"><defs><linearGradient id="tf1" x1="0" y1="0" x2="0" y2="1"><stop offset="0" stop-color="#fff2b0"/><stop offset="1" stop-color="#f2c24a"/></linearGradient></defs><path d="M.6 12.500v-9.300l1.200-1.200h4.300l1.200 1.500h5.700v9z" fill="#e0a838" stroke="#a87818" stroke-width=".8"/><path d="M.8 12.500l3-7h12.500l-3.200 7z" fill="url(#tf1)" stroke="#a87818" stroke-width=".8" stroke-linejoin="round"/></svg><svg class="jt" role="img" aria-label="等値面" style="left:62.70px;top:135.90px;width:37.60px;height:15.60px" viewBox="0 0 37.60 15.60" fill="#0a0a0a"><text x="0" y="11.76" font-size="12" textLength="35.6" lengthAdjust="spacingAndGlyphs">等値面</text></svg><svg style="left:42px;top:155px;width:17px;height:14px" viewBox="0 0 17 14"><defs><linearGradient id="tf1" x1="0" y1="0" x2="0" y2="1"><stop offset="0" stop-color="#fff2b0"/><stop offset="1" stop-color="#f2c24a"/></linearGradient></defs><path d="M.6 12.500v-9.300l1.200-1.200h4.300l1.200 1.500h5.700v9z" fill="#e0a838" stroke="#a87818" stroke-width=".8"/><path d="M.8 12.500l3-7h12.500l-3.200 7z" fill="url(#tf1)" stroke="#a87818" stroke-width=".8" stroke-linejoin="round"/></svg><svg class="jt" role="img" aria-label="流線" style="left:62.70px;top:153.90px;width:25.80px;height:15.60px" viewBox="0 0 25.80 15.60" fill="#0a0a0a"><text x="0" y="11.76" font-size="12" textLength="23.8" lengthAdjust="spacingAndGlyphs">流線</text></svg><div style="left:80px;top:81.5px;width:115px;height:17px;background:#f0f0f0"></div><svg style="left:67.5px;top:83.5px;width:10px;height:12px" viewBox="0 0 10 12"><path d="M4.700 .2l4.100 4-4.500 7.100-4.100-5.500z" fill="#3a7ce4"/><path d="M4.700 .2l4.100 4-4.300 2.300-4.300-.7z" fill="#a4ccff"/><path d="M4.500 6.500l4.300-2.300-4.500 7.100z" fill="#143cae"/></svg><svg class="lt" style="left:79.60px;top:82.13px;width:116.30px;height:15.84px"><text x="2" y="12" font-size="12" fill="#111" textLength="112.30" lengthAdjust="spacingAndGlyphs">v401_structured_asc0</text></svg></div><div id="doctabs" style="left:205.400px;top:143.900px;width:709.600px;height:21px;background:linear-gradient(#dde1e9,#ebedf2 40%,#e4e7ee);border:1px solid #a9adb7;border-bottom-color:#9a9ea8;box-sizing:border-box"><svg style="left:692.300px;top:8.100px;width:10px;height:6px" viewBox="0 0 10 6"><path d="M.2 .2h9.400l-4.700 5.200z" fill="#7d7d7d"/></svg></div><div style="left:205.100px;top:164.800px;width:.8px;height:565.400px;background:#e8eaf0"></div><div style="left:205.800px;top:164.800px;width:708.400px;height:565.400px;background:linear-gradient(90deg,#ffe27a,#ffff90)"></div><div style="left:912px;top:164.800px;width:2.200px;height:565.400px;background:linear-gradient(#ffe880,#ffff90)"></div><div style="left:205.800px;top:164.800px;width:706.200px;height:563.200px;background:#ffd96e"></div><div style="left:208.300px;top:166.400px;width:703.700px;height:561.600px;background:#fff"></div><div style="left:208.300px;top:166.400px;width:701.600px;height:559.500px;background:#6e6e6e"></div><svg style="left:204px;top:144px;width:102px;height:24px" viewBox="204 144 102 24"><defs><linearGradient id="dt1" x1="0" y1="0" x2="0" y2="1"><stop offset="0" stop-color="#fffad0"/><stop offset=".45" stop-color="#ffe995"/><stop offset=".55" stop-color="#ffe08a"/><stop offset="1" stop-color="#ffd96e"/></linearGradient></defs><path d="M206.300 165.500L225.300 147h73.500q2.500 0 2.500 2.500V165.500z" fill="url(#dt1)"/><path d="M206.300 165.100L225.300 146.800h73.700q2.500 0 2.500 2.500V164.500" fill="none" stroke="#8f949d" stroke-width="1"/><path d="M208.800 164.500L225.700 148h73" fill="none" stroke="#fffdf0" stroke-width="1" opacity=".9"/><path d="M288.500 153.500l7 6.500M295.500 153.500l-7 6.500" stroke="#6a6f78" stroke-width="1.300"/></svg><svg class="lt" style="left:237.70px;top:147.06px;width:39.20px;height:15.18px"><text x="2" y="11.5" font-size="11.5" font-weight="700" fill="#000" textLength="35.20" lengthAdjust="spacingAndGlyphs">Scene1</text></svg><svg id="view" style="left:209.900px;top:168px;width:700px;height:557.900px" viewBox="209.9 168 700 557.9"><defs><linearGradient id="bg" x1="0" y1="0" x2="0" y2="1"><stop offset="0" stop-color="#00002b"/><stop offset=".93" stop-color="#000002"/><stop offset="1" stop-color="#000000"/></linearGradient></defs><rect x="209" y="167" width="702" height="560" fill="url(#bg)"/><g shape-rendering="crispEdges"><polygon points="313.6,363.5 352.7,302.6 368.8,302.9 330.6,363.8" fill="#ff0000"/><polygon points="330.3,363.8 368.5,302.9 420.2,304.0 382.3,364.8" fill="#ff4000"/><polygon points="382.0,364.8 419.9,304.0 471.1,305.1 433.7,365.9" fill="#ff8000"/><polygon points="433.4,365.9 470.8,305.1 522.3,306.2 485.0,366.9" fill="#ffa800"/><polygon points="484.7,366.9 522.0,306.2 573.5,307.2 536.3,367.9" fill="#ffe000"/><polygon points="536.0,367.9 573.2,307.2 624.7,308.3 587.6,368.9" fill="#ffff20"/><polygon points="587.3,368.9 624.4,308.3 675.9,309.4 638.9,369.9" fill="#d8ff10"/><polygon points="638.6,369.9 675.6,309.4 727.1,310.5 689.9,370.9" fill="#90ff00"/><polygon points="689.6,370.9 726.8,310.5 778.3,311.5 740.9,371.9" fill="#30ff00"/><polygon points="740.6,371.9 778.0,311.5 800.9,312.0 760.9,372.3" fill="#00f020"/><polygon points="313.6,363.2 330.6,363.5 330.6,374.6 313.6,374.2" fill="#ff0000"/><polygon points="330.3,363.5 382.3,364.5 382.3,375.7 330.3,374.6" fill="#ff4000"/><polygon points="382.0,364.5 433.7,365.6 433.7,376.7 382.0,375.7" fill="#ff8000"/><polygon points="433.4,365.6 485.0,366.6 485.0,377.8 433.4,376.7" fill="#ffa800"/><polygon points="484.7,366.6 536.3,367.6 536.3,378.8 484.7,377.8" fill="#ffe000"/><polygon points="536.0,367.6 587.6,368.6 587.6,379.9 536.0,378.8" fill="#ffff20"/><polygon points="587.3,368.6 638.9,369.6 638.9,381.0 587.3,379.9" fill="#d8ff10"/><polygon points="638.6,369.6 689.9,370.6 689.9,382.0 638.6,381.0" fill="#90ff00"/><polygon points="689.6,370.6 740.9,371.6 740.9,383.1 689.6,382.0" fill="#30ff00"/><polygon points="740.6,371.6 760.9,372.0 760.9,383.5 740.6,383.1" fill="#00f020"/><clipPath id="cpF"><polygon points="313.8,374.2 355.6,375.1 359.2,510.5 541.0,513.5 543.3,576.2 630.4,577.8 671.7,517.0 764.2,519.0 766.7,591.3 320.0,582.0"/></clipPath><g clip-path="url(#cpF)"><rect x="300" y="360" width="480" height="240" fill="#ff8000"/><polygon points="300.0,360.0 381.6,364.7 381.6,375.4 355.6,375.1 355.6,387.4 316.0,446.0 300.0,460.0" fill="#ff4000"/><polygon points="300.0,360.0 330.2,364.0 330.2,373.5 315.7,389.4 300.0,400.0" fill="#ff0000"/><polygon points="388.8,500.0 425.4,500.0 380.0,572.0 380.0,600.0 343.9,600.0 343.9,571.3" fill="#ffa800"/><polygon points="425.0,500.0 461.7,500.0 415.8,572.8 415.8,600.0 379.6,600.0 379.6,572.0" fill="#ffe000"/><polygon points="461.3,500.0 497.9,500.0 451.5,573.5 451.5,600.0 415.4,600.0 415.4,572.8" fill="#ffff20"/><polygon points="497.5,500.0 534.1,500.0 487.3,574.3 487.3,600.0 451.1,600.0 451.1,573.5" fill="#d8ff10"/><polygon points="533.7,500.0 570.3,500.0 523.0,575.0 523.0,600.0 486.9,600.0 486.9,574.3" fill="#90ff00"/><polygon points="569.9,500.0 606.5,500.0 558.8,575.8 558.8,600.0 522.6,600.0 522.6,575.0" fill="#30ff00"/><polygon points="606.1,500.0 642.7,500.0 594.5,576.5 594.5,600.0 558.4,600.0 558.4,575.8" fill="#00f020"/><polygon points="642.3,500.0 679.0,500.0 630.3,577.2 630.3,600.0 594.1,600.0 594.1,576.5" fill="#00e060"/><polygon points="678.6,500.0 715.2,500.0 666.0,578.0 666.0,600.0 629.9,600.0 629.9,577.2" fill="#00d8b0"/><polygon points="714.8,500.0 751.4,500.0 701.8,578.7 701.8,600.0 665.6,600.0 665.6,578.0" fill="#00b8e0"/><polygon points="751.0,500.0 787.6,500.0 737.5,579.5 737.5,600.0 701.4,600.0 701.4,578.7" fill="#0090f0"/><polygon points="787.2,500.0 900.4,500.0 900.4,580.0 900.4,600.0 737.1,600.0 737.1,579.5" fill="#0068ff"/></g><clipPath id="cpR"><polygon points="760.6,372.3 800.6,312.0 806.4,529.6 766.7,591.3"/></clipPath><g clip-path="url(#cpR)"><rect x="755" y="305" width="60" height="300" fill="#0068ff"/><polygon points="755.0,309.8 815.0,219.8 815.0,305.7 755.0,391.4" fill="#00f020"/><polygon points="755.0,391.0 815.0,305.3 815.0,326.7 755.0,414.3" fill="#00e060"/><polygon points="755.0,413.9 815.0,326.3 815.0,349.7 755.0,435.5" fill="#00d8b0"/><polygon points="755.0,435.1 815.0,349.3 815.0,372.8 755.0,456.7" fill="#00b8e0"/><polygon points="755.0,456.3 815.0,372.4 815.0,395.8 755.0,477.9" fill="#0090f0"/></g><clipPath id="cpP"><polygon points="426.3,376.3 466.7,377.2 468.8,458.1 430.5,517.0"/></clipPath><g clip-path="url(#cpP)"><rect x="420" y="370" width="60" height="150" fill="#d8ff10"/><polygon points="420.0,370.0 466.9,370.0 466.9,378.0 427.4,431.7 420.0,441.8" fill="#ffff20"/><polygon points="480.0,421.4 468.8,439.0 429.7,500.4 420.0,515.6 420.0,530.0 480.0,530.0" fill="#90ff00"/></g><clipPath id="cpB"><polygon points="573.8,379.6 667.9,381.6 671.7,517.0 630.4,577.9 543.3,576.3 541.0,513.5 539.3,433.5"/></clipPath><g clip-path="url(#cpB)"><rect x="535" y="375" width="140" height="210" fill="#0068ff"/><polygon points="535.0,438.9 625.3,441.5 630.2,578.0 630.2,590.0 535.0,590.0" fill="#0090f0"/><polygon points="535.0,450.3 618.0,453.6 622.0,578.0 622.0,590.0 535.0,590.0" fill="#00b8e0"/><polygon points="535.0,463.1 610.0,465.6 614.0,578.0 614.0,590.0 535.0,590.0" fill="#00d8b0"/><polygon points="535.0,475.2 602.8,478.0 606.0,578.0 606.0,590.0 535.0,590.0" fill="#00e060"/><polygon points="535.0,487.9 596.3,490.0 598.8,578.0 598.8,590.0 535.0,590.0" fill="#00f020"/><polygon points="535.0,499.9 588.3,501.7 590.7,578.0 590.7,590.0 535.0,590.0" fill="#30ff00"/><polygon points="535.0,512.9 581.0,514.5 583.0,578.0 583.0,590.0 535.0,590.0" fill="#90ff00"/><polygon points="535.0,524.9 573.8,526.6 575.0,578.0 575.0,590.0 535.0,590.0" fill="#d8ff10"/><polygon points="535.0,536.9 566.3,538.2 567.4,578.0 567.4,590.0 535.0,590.0" fill="#ffff20"/><polygon points="535.0,549.9 559.0,550.7 559.9,578.0 559.9,590.0 535.0,590.0" fill="#ffe000"/><polygon points="535.0,561.9 551.0,562.3 551.8,578.0 551.8,590.0 535.0,590.0" fill="#ffa800"/></g></g><linearGradient id="eg" gradientUnits="userSpaceOnUse" x1="313" y1="0" x2="806" y2="0"><stop offset="0" stop-color="#34e400"/><stop offset=".45" stop-color="#58bc00"/><stop offset=".8" stop-color="#7aa408"/><stop offset="1" stop-color="#a08c18"/></linearGradient><polygon points="313.6,363.5 352.7,302.6 800.6,312.0 760.6,372.3" stroke="url(#eg)" stroke-width="1" fill="none" stroke-opacity=".9"/><polyline points="313.6,363.5 320.0,582.0 766.7,591.3" stroke="url(#eg)" stroke-width="1" fill="none" stroke-opacity=".9"/><polyline points="766.7,591.3 760.6,372.3" stroke="#48d800" stroke-width="1" fill="none" stroke-opacity=".85"/><polyline points="800.6,312.0 806.4,529.6 766.7,591.3" stroke="url(#eg)" stroke-width="1" fill="none" stroke-opacity=".9"/><polyline points="355.6,375.1 359.2,510.5" stroke="#40d000" stroke-width=".8" fill="none" stroke-opacity=".6"/><defs><linearGradient id="lg" x1="0" y1="0" x2="0" y2="1"><stop offset="0" stop-color="#ff0000"/><stop offset=".075" stop-color="#ff0000"/><stop offset=".22" stop-color="#ff8000"/><stop offset=".36" stop-color="#ffff00"/><stop offset=".49" stop-color="#80ff00"/><stop offset=".615" stop-color="#00ff00"/><stop offset=".715" stop-color="#00e080"/><stop offset=".80" stop-color="#00c0e0"/><stop offset=".915" stop-color="#0070f0"/><stop offset="1" stop-color="#2828ff"/></linearGradient></defs><rect x="223" y="204" width="15" height="399.5" fill="url(#lg)"/></svg><svg class="lt" style="left:246.80px;top:197.16px;width:47.17px;height:15.18px"><text x="2" y="11.5" font-size="11.5" fill="#fff" textLength="43.17" lengthAdjust="spacingAndGlyphs">0.023909</text></svg><svg class="lt" style="left:246.80px;top:222.16px;width:47.17px;height:15.18px"><text x="2" y="11.5" font-size="11.5" fill="#fff" textLength="43.17" lengthAdjust="spacingAndGlyphs">0.022309</text></svg><svg class="lt" style="left:246.80px;top:247.16px;width:47.17px;height:15.18px"><text x="2" y="11.5" font-size="11.5" fill="#fff" textLength="43.17" lengthAdjust="spacingAndGlyphs">0.020709</text></svg><svg class="lt" style="left:246.80px;top:272.16px;width:47.17px;height:15.18px"><text x="2" y="11.5" font-size="11.5" fill="#fff" textLength="43.17" lengthAdjust="spacingAndGlyphs">0.019109</text></svg><svg class="lt" style="left:246.80px;top:297.16px;width:47.17px;height:15.18px"><text x="2" y="11.5" font-size="11.5" fill="#fff" textLength="43.17" lengthAdjust="spacingAndGlyphs">0.017509</text></svg><svg class="lt" style="left:246.80px;top:322.16px;width:47.17px;height:15.18px"><text x="2" y="11.5" font-size="11.5" fill="#fff" textLength="43.17" lengthAdjust="spacingAndGlyphs">0.015909</text></svg><svg class="lt" style="left:246.80px;top:347.16px;width:47.17px;height:15.18px"><text x="2" y="11.5" font-size="11.5" fill="#fff" textLength="43.17" lengthAdjust="spacingAndGlyphs">0.014309</text></svg><svg class="lt" style="left:246.80px;top:372.16px;width:47.17px;height:15.18px"><text x="2" y="11.5" font-size="11.5" fill="#fff" textLength="43.17" lengthAdjust="spacingAndGlyphs">0.012709</text></svg><svg class="lt" style="left:246.80px;top:397.16px;width:45.64px;height:15.18px"><text x="2" y="11.5" font-size="11.5" fill="#fff" textLength="41.64" lengthAdjust="spacingAndGlyphs">0.011109</text></svg><svg class="lt" style="left:246.80px;top:422.16px;width:47.17px;height:15.18px"><text x="2" y="11.5" font-size="11.5" fill="#fff" textLength="43.17" lengthAdjust="spacingAndGlyphs">0.009509</text></svg><svg class="lt" style="left:246.80px;top:447.16px;width:47.17px;height:15.18px"><text x="2" y="11.5" font-size="11.5" fill="#fff" textLength="43.17" lengthAdjust="spacingAndGlyphs">0.007909</text></svg><svg class="lt" style="left:246.80px;top:472.16px;width:47.17px;height:15.18px"><text x="2" y="11.5" font-size="11.5" fill="#fff" textLength="43.17" lengthAdjust="spacingAndGlyphs">0.006309</text></svg><svg class="lt" style="left:246.80px;top:497.16px;width:47.17px;height:15.18px"><text x="2" y="11.5" font-size="11.5" fill="#fff" textLength="43.17" lengthAdjust="spacingAndGlyphs">0.004709</text></svg><svg class="lt" style="left:246.80px;top:522.16px;width:47.17px;height:15.18px"><text x="2" y="11.5" font-size="11.5" fill="#fff" textLength="43.17" lengthAdjust="spacingAndGlyphs">0.003109</text></svg><svg class="lt" style="left:246.80px;top:547.16px;width:47.17px;height:15.18px"><text x="2" y="11.5" font-size="11.5" fill="#fff" textLength="43.17" lengthAdjust="spacingAndGlyphs">0.001509</text></svg><svg class="lt" style="left:246.80px;top:572.16px;width:53.22px;height:15.18px"><text x="2" y="11.5" font-size="11.5" fill="#fff" textLength="49.22" lengthAdjust="spacingAndGlyphs">−0.000091</text></svg><svg class="lt" style="left:246.80px;top:594.16px;width:53.22px;height:15.18px"><text x="2" y="11.5" font-size="11.5" fill="#fff" textLength="49.22" lengthAdjust="spacingAndGlyphs">−0.001691</text></svg><svg class="lt" style="left:218.20px;top:175.76px;width:19.60px;height:19.80px"><text x="2" y="15" font-size="15" fill="#fff" textLength="15.60" lengthAdjust="spacingAndGlyphs">P1</text></svg><svg class="lt" style="left:811.38px;top:170.02px;width:83.92px;height:18.88px"><text x="2" y="14.3" font-size="14.3" fill="rgba(255,255,255,.86)" textLength="79.92" lengthAdjust="spacingAndGlyphs">Prove value</text></svg><svg class="lt" style="left:846.66px;top:186.32px;width:63.64px;height:18.88px"><text x="2" y="14.3" font-size="14.3" fill="rgba(255,255,255,.86)" textLength="59.64" lengthAdjust="spacingAndGlyphs">0.007659</text></svg><svg style="left:255px;top:615px;width:80px;height:70px" viewBox="255 615 80 70"><path d="M269.3 666V640" stroke="#00d8e8" stroke-width="2.6"/><path d="M265.2 641.5l4.100-8.800 4.100 8.800z" fill="#30e8f0"/><path d="M269.5 666.3h26" stroke="#f01818" stroke-width="2.2"/><path d="M294.5 662.8l9.500 3.500-9.500 3.500z" fill="#ff2020"/><path d="M270 664l5-6" stroke="#20c020" stroke-width="2"/><path d="M272.5 660.5c0-3 2-5.500 4.500-4.500c0.500 3-2 5-4.500 4.500z" fill="#30d030"/></svg><svg class="lt" style="left:265.30px;top:616.96px;width:11.03px;height:15.18px"><text x="2" y="11.5" font-size="11.5" fill="#20e0f0" textLength="7.03" lengthAdjust="spacingAndGlyphs">Z</text></svg><svg class="lt" style="left:277.30px;top:652.08px;width:11.34px;height:14.52px"><text x="2" y="11" font-size="11" fill="#20d020" textLength="7.34" lengthAdjust="spacingAndGlyphs">Y</text></svg><svg class="lt" style="left:316.50px;top:667.16px;width:11.67px;height:15.18px"><text x="2" y="11.5" font-size="11.5" fill="#f01818" textLength="7.67" lengthAdjust="spacingAndGlyphs">X</text></svg><div id="prop" style="left:919px;top:144px;width:199px;height:586px;background:#eceff5"><div style="left:0;top:0;width:1px;height:586px;background:#f2f4f8"></div><div style="left:1px;top:1.300px;width:197.500px;height:18.400px;background:#bac0cb"></div><svg class="lt" style="left:2.00px;top:2.03px;width:47.20px;height:15.84px"><text x="2" y="12" font-size="12" fill="#3c4450" textLength="43.20" lengthAdjust="spacingAndGlyphs">Property</text></svg><svg style="left:168.8px;top:6px;width:9px;height:9px" viewBox="0 0 9 9"><path d="M2.500 .7h3.500v5h-3.500z" fill="none" stroke="#75767a" stroke-width="1"/><path d="M5.500 .7v5" stroke="#75767a" stroke-width="1.600"/><path d="M1 5.700h7M4.500 6v2.400" stroke="#75767a" stroke-width="1.100" fill="none"/></svg><svg style="left:185.5px;top:6px;width:9px;height:8px" viewBox="0 0 9 8"><path d="M.7 .5l7.600 7M8.300 .5l-7.600 7" stroke="#75767a" stroke-width="1.300"/></svg><div style="left:1.5px;top:22.4px;width:179.5px;height:475px;background:#e4e9f3"></div><svg style="left:8px;top:27.4px;width:9px;height:9px" viewBox="0 0 9 9"><rect x=".5" y=".5" width="8" height="8" rx="1.200" fill="#f4f4f6" stroke="#8a8f98"/><rect x="1.500" y="1.500" width="6" height="3" fill="#fff"/><path d="M2 4.500h5" stroke="#3b4fa2" stroke-width="1.100"/></svg><svg class="jt" role="img" aria-label="基本情報" style="left:25.50px;top:23.30px;width:57.50px;height:16.90px" viewBox="0 0 57.50 16.90" fill="#808894"><text x="0" y="12.74" font-size="13" font-weight="700" textLength="55.5" lengthAdjust="spacingAndGlyphs">基本情報</text></svg><div style="left:22.3px;top:41.4px;width:77.9px;height:18px;background:#fff"></div><div style="left:101.3px;top:41.4px;width:79.7px;height:18px;background:#fff"></div><svg class="jt" role="img" aria-label="名前" style="left:25.50px;top:42.30px;width:28.00px;height:16.90px" viewBox="0 0 28.00 16.90" fill="#0a0a0a"><text x="0" y="12.74" font-size="13" textLength="26" lengthAdjust="spacingAndGlyphs">名前</text></svg><svg class="lt" style="left:103.10px;top:43.23px;width:71.60px;height:15.84px"><text x="2" y="12" font-size="12" fill="#8a9099" textLength="67.60" lengthAdjust="spacingAndGlyphs">v401_struct...</text></svg><div style="left:22.3px;top:60.4px;width:77.9px;height:18px;background:#fff"></div><div style="left:101.3px;top:60.4px;width:79.7px;height:18px;background:#fff"></div><svg class="jt" role="img" aria-label="表示" style="left:25.50px;top:61.30px;width:28.00px;height:16.90px" viewBox="0 0 28.00 16.90" fill="#0a0a0a"><text x="0" y="12.74" font-size="13" textLength="26" lengthAdjust="spacingAndGlyphs">表示</text></svg><svg class="lt" style="left:103.10px;top:62.23px;width:27.40px;height:15.84px"><text x="2" y="12" font-size="12" fill="#111" textLength="23.40" lengthAdjust="spacingAndGlyphs">True</text></svg><svg style="left:8px;top:84.4px;width:9px;height:9px" viewBox="0 0 9 9"><rect x=".5" y=".5" width="8" height="8" rx="1.200" fill="#f4f4f6" stroke="#8a8f98"/><rect x="1.500" y="1.500" width="6" height="3" fill="#fff"/><path d="M2 4.500h5" stroke="#3b4fa2" stroke-width="1.100"/></svg><svg class="jt" role="img" aria-label="オブジェクト情報" style="left:25.50px;top:80.30px;width:92.00px;height:16.90px" viewBox="0 0 92.00 16.90" fill="#808894"><text x="0" y="12.9" font-size="13" font-weight="700" textLength="90" lengthAdjust="spacingAndGlyphs">オブジェクト情報</text></svg><div style="left:22.3px;top:98.4px;width:77.9px;height:18px;background:#fff"></div><div style="left:101.3px;top:98.4px;width:79.7px;height:18px;background:#fff"></div><svg class="jt" role="img" aria-label="色" style="left:25.50px;top:99.30px;width:15.00px;height:16.90px" viewBox="0 0 15.00 16.90" fill="#0a0a0a"><text x="0" y="12.74" font-size="13" textLength="13" lengthAdjust="spacingAndGlyphs">色</text></svg><div style="left:103.5px;top:99.9px;width:15px;height:15px;box-sizing:border-box;border:1px solid #000;background:#7f7f7f"></div><svg class="lt" style="left:122.30px;top:100.23px;width:34.40px;height:15.84px"><text x="2" y="12" font-size="12" fill="#111" textLength="30.40" lengthAdjust="spacingAndGlyphs">7f7f7f</text></svg><div style="left:22.3px;top:117.4px;width:77.9px;height:18px;background:#fff"></div><div style="left:101.3px;top:117.4px;width:79.7px;height:18px;background:#fff"></div><svg class="jt" role="img" aria-label="不透明度" style="left:25.50px;top:118.30px;width:54.00px;height:16.90px" viewBox="0 0 54.00 16.90" fill="#0a0a0a"><text x="0" y="12.74" font-size="13" textLength="52" lengthAdjust="spacingAndGlyphs">不透明度</text></svg><svg class="lt" style="left:103.10px;top:119.23px;width:22.60px;height:15.84px"><text x="2" y="12" font-size="12" fill="#111" textLength="18.60" lengthAdjust="spacingAndGlyphs">100</text></svg><div style="left:22.3px;top:136.4px;width:77.9px;height:18px;background:#fff"></div><div style="left:101.3px;top:136.4px;width:79.7px;height:18px;background:#fff"></div><svg class="jt" role="img" aria-label="エッジ表示" style="left:25.50px;top:137.30px;width:56.86px;height:16.90px" viewBox="0 0 56.86 16.90" fill="#0a0a0a"><text x="0" y="12.9" font-size="13" textLength="54.86" lengthAdjust="spacingAndGlyphs">エッジ表示</text></svg><svg class="jt" role="img" aria-label="シェイディン" style="left:104.80px;top:137.30px;width:58.00px;height:16.90px" viewBox="0 0 58.00 16.90" fill="#0a0a0a"><text x="0" y="13.23" font-size="13" textLength="56" lengthAdjust="spacingAndGlyphs">シェイディン</text></svg><svg class="lt" style="left:159.50px;top:138.23px;width:14.00px;height:15.84px"><text x="2" y="12" font-size="12" fill="#111" textLength="10.00" lengthAdjust="spacingAndGlyphs">...</text></svg><svg style="left:27.5px;top:160.4px;width:9px;height:9px" viewBox="0 0 9 9"><rect x=".5" y=".5" width="8" height="8" rx="1.200" fill="#f4f4f6" stroke="#8a8f98"/><rect x="1.500" y="1.500" width="6" height="3" fill="#fff"/><path d="M2 4.500h5" stroke="#3b4fa2" stroke-width="1.100"/></svg><svg class="jt" role="img" aria-label="位置" style="left:44.50px;top:156.30px;width:28.50px;height:16.90px" viewBox="0 0 28.50 16.90" fill="#808894"><text x="0" y="12.74" font-size="13" font-weight="700" textLength="26.5" lengthAdjust="spacingAndGlyphs">位置</text></svg><div style="left:41px;top:174.4px;width:59.2px;height:18px;background:#fff"></div><div style="left:101.3px;top:174.4px;width:79.7px;height:18px;background:#fff"></div><svg class="lt" style="left:43.20px;top:176.23px;width:11.40px;height:15.84px"><text x="2" y="12" font-size="12" fill="#111" textLength="7.40" lengthAdjust="spacingAndGlyphs">X</text></svg><svg class="lt" style="left:103.10px;top:176.23px;width:49.40px;height:15.84px"><text x="2" y="12" font-size="12" fill="#111" textLength="45.40" lengthAdjust="spacingAndGlyphs">0.000000</text></svg><div style="left:41px;top:193.4px;width:59.2px;height:18px;background:#fff"></div><div style="left:101.3px;top:193.4px;width:79.7px;height:18px;background:#fff"></div><svg class="lt" style="left:43.20px;top:195.23px;width:11.40px;height:15.84px"><text x="2" y="12" font-size="12" fill="#111" textLength="7.40" lengthAdjust="spacingAndGlyphs">Y</text></svg><svg class="lt" style="left:103.10px;top:195.23px;width:49.40px;height:15.84px"><text x="2" y="12" font-size="12" fill="#111" textLength="45.40" lengthAdjust="spacingAndGlyphs">0.000000</text></svg><div style="left:41px;top:212.4px;width:59.2px;height:18px;background:#fff"></div><div style="left:101.3px;top:212.4px;width:79.7px;height:18px;background:#fff"></div><svg class="lt" style="left:43.20px;top:214.23px;width:11.40px;height:15.84px"><text x="2" y="12" font-size="12" fill="#111" textLength="7.40" lengthAdjust="spacingAndGlyphs">Z</text></svg><svg class="lt" style="left:103.10px;top:214.23px;width:49.40px;height:15.84px"><text x="2" y="12" font-size="12" fill="#111" textLength="45.40" lengthAdjust="spacingAndGlyphs">0.000000</text></svg><svg style="left:27.5px;top:236.4px;width:9px;height:9px" viewBox="0 0 9 9"><rect x=".5" y=".5" width="8" height="8" rx="1.200" fill="#f4f4f6" stroke="#8a8f98"/><rect x="1.500" y="1.500" width="6" height="3" fill="#fff"/><path d="M2 4.500h5" stroke="#3b4fa2" stroke-width="1.100"/></svg><svg class="jt" role="img" aria-label="サイズ" style="left:44.50px;top:232.30px;width:34.00px;height:16.90px" viewBox="0 0 34.00 16.90" fill="#808894"><text x="0" y="13.23" font-size="13" font-weight="700" textLength="32" lengthAdjust="spacingAndGlyphs">サイズ</text></svg><div style="left:41px;top:250.4px;width:59.2px;height:18px;background:#fff"></div><div style="left:101.3px;top:250.4px;width:79.7px;height:18px;background:#fff"></div><svg class="lt" style="left:43.20px;top:252.23px;width:11.40px;height:15.84px"><text x="2" y="12" font-size="12" fill="#111" textLength="7.40" lengthAdjust="spacingAndGlyphs">X</text></svg><svg class="lt" style="left:103.10px;top:252.23px;width:49.40px;height:15.84px"><text x="2" y="12" font-size="12" fill="#111" textLength="45.40" lengthAdjust="spacingAndGlyphs">2.000000</text></svg><div style="left:41px;top:269.4px;width:59.2px;height:18px;background:#fff"></div><div style="left:101.3px;top:269.4px;width:79.7px;height:18px;background:#fff"></div><svg class="lt" style="left:43.20px;top:271.23px;width:11.40px;height:15.84px"><text x="2" y="12" font-size="12" fill="#111" textLength="7.40" lengthAdjust="spacingAndGlyphs">Y</text></svg><svg class="lt" style="left:103.10px;top:271.23px;width:49.40px;height:15.84px"><text x="2" y="12" font-size="12" fill="#111" textLength="45.40" lengthAdjust="spacingAndGlyphs">1.000000</text></svg><div style="left:41px;top:288.4px;width:59.2px;height:18px;background:#fff"></div><div style="left:101.3px;top:288.4px;width:79.7px;height:18px;background:#fff"></div><svg class="lt" style="left:43.20px;top:290.23px;width:11.40px;height:15.84px"><text x="2" y="12" font-size="12" fill="#111" textLength="7.40" lengthAdjust="spacingAndGlyphs">Z</text></svg><svg class="lt" style="left:103.10px;top:290.23px;width:49.40px;height:15.84px"><text x="2" y="12" font-size="12" fill="#111" textLength="45.40" lengthAdjust="spacingAndGlyphs">1.000000</text></svg><svg style="left:8px;top:312.4px;width:9px;height:9px" viewBox="0 0 9 9"><rect x=".5" y=".5" width="8" height="8" rx="1.200" fill="#f4f4f6" stroke="#8a8f98"/><rect x="1.500" y="1.500" width="6" height="3" fill="#fff"/><path d="M2 4.500h5" stroke="#3b4fa2" stroke-width="1.100"/></svg><svg class="lt" style="left:24.00px;top:309.13px;width:42.60px;height:15.84px"><text x="2" y="12" font-size="12" font-weight="700" fill="#808894" textLength="38.60" lengthAdjust="spacingAndGlyphs">Option</text></svg><div style="left:22.3px;top:326.4px;width:77.9px;height:18px;background:#fff"></div><div style="left:101.3px;top:326.4px;width:79.7px;height:18px;background:#fff"></div><svg class="jt" role="img" aria-label="コンター表示" style="left:25.50px;top:327.30px;width:66.48px;height:16.90px" viewBox="0 0 66.48 16.90" fill="#0a0a0a"><text x="0" y="12.9" font-size="13" textLength="64.5" lengthAdjust="spacingAndGlyphs">コンター表示</text></svg><svg class="lt" style="left:103.10px;top:328.23px;width:27.40px;height:15.84px"><text x="2" y="12" font-size="12" fill="#111" textLength="23.40" lengthAdjust="spacingAndGlyphs">True</text></svg><svg style="left:8px;top:350.4px;width:9px;height:9px" viewBox="0 0 9 9"><rect x=".5" y=".5" width="8" height="8" rx="1.200" fill="#f4f4f6" stroke="#8a8f98"/><rect x="1.500" y="1.500" width="6" height="3" fill="#fff"/><path d="M2 4.500h5" stroke="#3b4fa2" stroke-width="1.100"/></svg><svg class="jt" role="img" aria-label="コンター設定" style="left:25.50px;top:346.30px;width:72.00px;height:16.90px" viewBox="0 0 72.00 16.90" fill="#808894"><text x="0" y="12.9" font-size="13" font-weight="700" textLength="70" lengthAdjust="spacingAndGlyphs">コンター設定</text></svg><div style="left:22.3px;top:364.4px;width:77.9px;height:18px;background:#fff"></div><div style="left:101.3px;top:364.4px;width:79.7px;height:18px;background:#fff"></div><svg class="jt" role="img" aria-label="スタイル" style="left:25.50px;top:365.30px;width:40.48px;height:16.90px" viewBox="0 0 40.48 16.90" fill="#0a0a0a"><text x="0" y="13.23" font-size="13" textLength="38.5" lengthAdjust="spacingAndGlyphs">スタイル</text></svg><svg class="lt" style="left:103.10px;top:366.23px;width:42.40px;height:15.84px"><text x="2" y="12" font-size="12" fill="#111" textLength="38.40" lengthAdjust="spacingAndGlyphs">Texture</text></svg><div style="left:22.3px;top:383.4px;width:77.9px;height:18px;background:#fff"></div><div style="left:101.3px;top:383.4px;width:79.7px;height:18px;background:#fff"></div><svg class="jt" role="img" aria-label="平均値" style="left:25.50px;top:384.30px;width:41.00px;height:16.90px" viewBox="0 0 41.00 16.90" fill="#0a0a0a"><text x="0" y="12.74" font-size="13" textLength="39" lengthAdjust="spacingAndGlyphs">平均値</text></svg><svg class="lt" style="left:103.10px;top:385.23px;width:49.40px;height:15.84px"><text x="2" y="12" font-size="12" fill="#111" textLength="45.40" lengthAdjust="spacingAndGlyphs">0.011305</text></svg><div style="left:22.3px;top:402.4px;width:77.9px;height:18px;background:#fff"></div><div style="left:101.3px;top:402.4px;width:79.7px;height:18px;background:#fff"></div><svg class="jt" role="img" aria-label="ライト" style="left:25.50px;top:403.30px;width:30.86px;height:16.90px" viewBox="0 0 30.86 16.90" fill="#0a0a0a"><text x="0" y="13.23" font-size="13" textLength="28.9" lengthAdjust="spacingAndGlyphs">ライト</text></svg><svg class="lt" style="left:103.10px;top:404.23px;width:30.60px;height:15.84px"><text x="2" y="12" font-size="12" fill="#111" textLength="26.60" lengthAdjust="spacingAndGlyphs">False</text></svg><div style="left:22.3px;top:421.4px;width:77.9px;height:18px;background:#fff"></div><div style="left:101.3px;top:421.4px;width:79.7px;height:18px;background:#fff"></div><svg class="jt" role="img" aria-label="境界線" style="left:25.50px;top:422.30px;width:41.00px;height:16.90px" viewBox="0 0 41.00 16.90" fill="#0a0a0a"><text x="0" y="12.74" font-size="13" textLength="39" lengthAdjust="spacingAndGlyphs">境界線</text></svg><svg class="lt" style="left:103.10px;top:423.23px;width:30.60px;height:15.84px"><text x="2" y="12" font-size="12" fill="#111" textLength="26.60" lengthAdjust="spacingAndGlyphs">False</text></svg><div style="left:22.3px;top:440.4px;width:77.9px;height:18px;background:#fff"></div><div style="left:101.3px;top:440.4px;width:79.7px;height:18px;background:#fff"></div><svg class="jt" role="img" aria-label="線色" style="left:25.50px;top:441.30px;width:28.00px;height:16.90px" viewBox="0 0 28.00 16.90" fill="#0a0a0a"><text x="0" y="12.74" font-size="13" textLength="26" lengthAdjust="spacingAndGlyphs">線色</text></svg><div style="left:103.5px;top:441.9px;width:15px;height:15px;box-sizing:border-box;border:1px solid #000;background:#191919"></div><svg class="lt" style="left:122.30px;top:442.23px;width:40.00px;height:15.84px"><text x="2" y="12" font-size="12" fill="#111" textLength="36.00" lengthAdjust="spacingAndGlyphs">191919</text></svg><div style="left:22.3px;top:459.4px;width:77.9px;height:18px;background:#fff"></div><div style="left:101.3px;top:459.4px;width:79.7px;height:18px;background:#fff"></div><svg class="jt" role="img" aria-label="線幅" style="left:25.50px;top:460.30px;width:28.00px;height:16.90px" viewBox="0 0 28.00 16.90" fill="#0a0a0a"><text x="0" y="12.74" font-size="13" textLength="26" lengthAdjust="spacingAndGlyphs">線幅</text></svg><svg class="lt" style="left:103.10px;top:461.23px;width:49.40px;height:15.84px"><text x="2" y="12" font-size="12" fill="#111" textLength="45.40" lengthAdjust="spacingAndGlyphs">1.000000</text></svg><div style="left:22.3px;top:478.4px;width:77.9px;height:18px;background:#fff"></div><div style="left:101.3px;top:478.4px;width:79.7px;height:18px;background:#fff"></div><svg class="jt" role="img" aria-label="ファセット" style="left:25.50px;top:479.30px;width:50.10px;height:16.90px" viewBox="0 0 50.10 16.90" fill="#0a0a0a"><text x="0" y="13.23" font-size="13" textLength="48.1" lengthAdjust="spacingAndGlyphs">ファセット</text></svg><svg class="lt" style="left:103.10px;top:480.23px;width:30.60px;height:15.84px"><text x="2" y="12" font-size="12" fill="#111" textLength="26.60" lengthAdjust="spacingAndGlyphs">False</text></svg><div style="left:181px;top:22.4px;width:15.500px;height:475px;background:#e9edf6"></div><div style="left:181px;top:40px;width:15.500px;height:273px;background:#c8cbd0"></div><svg style="left:184.3px;top:29.5px;width:9px;height:6px" viewBox="0 0 9 6"><path d="M.7 5.200l3.800-3.900 3.800 3.900" stroke="#3a3a3a" stroke-width="1.400" fill="none"/></svg><svg style="left:184.3px;top:484.5px;width:9px;height:6px" viewBox="0 0 9 6"><path d="M.7 .8l3.800 3.900 3.800-3.900" stroke="#3a3a3a" stroke-width="1.400" fill="none"/></svg><div style="left:4px;top:501px;width:192px;height:60px;box-sizing:border-box;border:1px solid #9ea3ae;background:#e8ecf6;box-shadow:0 0 0 1.500px #f6f7fa"></div><div style="left:1px;top:563px;width:198px;height:1px;background:#a9aeb9"></div><div style="left:1px;top:564px;width:198px;height:23px;background:#d4d8e1"></div><div style="left:4.5px;top:564px;width:68px;height:19.500px;box-sizing:border-box;border:1px solid #b4c4cc;border-top:none;border-radius:0 0 3px 3px;background:linear-gradient(#eef2f7,#f2f5f9);box-shadow:inset 0 0 0 1px #e4f6fa"></div><svg style="left:6px;top:565.5px;width:17px;height:17px" viewBox="0 0 17 17"><rect x="1.500" y="5.500" width="10" height="10" fill="#fff" stroke="#3e5c9a" stroke-width="1"/><path d="M3.500 8.500h1M6 8.500h4M3.500 10.500h1M6 10.500h4M3.500 12.500h1M6 12.500h4" stroke="#6f8fc8" stroke-width="1"/><path d="M6.500 5l4.500-3.500 5 3-2 1.500-2.500-1-2.500 2.500z" fill="#f0c040" stroke="#a07820" stroke-width=".6"/><path d="M13 2.500l3 2" stroke="#2fa030" stroke-width="1.400"/></svg><svg class="lt" style="left:22.00px;top:566.73px;width:47.40px;height:15.84px"><text x="2" y="12" font-size="12" fill="#50586a" textLength="43.40" lengthAdjust="spacingAndGlyphs">Property</text></svg><svg class="lt" style="left:80.00px;top:566.73px;width:34.20px;height:15.84px"><text x="2" y="12" font-size="12" fill="#50586a" textLength="30.20" lengthAdjust="spacingAndGlyphs">Probe</text></svg></div><div id="status" style="left:1px;top:731px;width:1118px;height:24px;background:linear-gradient(#e6e9ef 0,#d9dce5 20%,#d0d4dd 48%,#c1c6d0 52%,#c6cbd5 80%,#cdd1da);border-top:1px solid #a9aeb9;box-sizing:border-box"><svg class="lt" style="left:7.20px;top:3.16px;width:268.00px;height:15.18px"><text x="2" y="11.5" font-size="11.5" fill="#30363f" textLength="264.00" lengthAdjust="spacingAndGlyphs">center:  1.00000E+000,  5.00000E-001,  5.00000E-001</text></svg><svg class="lt" style="left:301.20px;top:3.16px;width:264.50px;height:15.18px"><text x="2" y="11.5" font-size="11.5" fill="#30363f" textLength="260.50" lengthAdjust="spacingAndGlyphs">min:  0.00000E+000,  0.00000E+000,  0.00000E+000</text></svg><svg class="lt" style="left:582.40px;top:3.16px;width:264.50px;height:15.18px"><text x="2" y="11.5" font-size="11.5" fill="#30363f" textLength="260.50" lengthAdjust="spacingAndGlyphs">max:  2.00000E+000,  1.00000E+000,  1.00000E+000</text></svg><div style="left:291.5px;top:1px;width:1px;height:22px;background:#9da2ad"></div><div style="left:292.5px;top:1px;width:1px;height:22px;background:#eef0f4"></div><div style="left:573.5px;top:1px;width:1px;height:22px;background:#9da2ad"></div><div style="left:574.5px;top:1px;width:1px;height:22px;background:#eef0f4"></div><div style="left:1074.5px;top:1px;width:1px;height:22px;background:#9da2ad"></div><div style="left:1075.5px;top:1px;width:1px;height:22px;background:#eef0f4"></div><svg style="left:1104px;top:10px;width:12px;height:12px" viewBox="0 0 12 12"><rect x="9" y="1" width="2" height="2" fill="#8d929c"/><rect x="5" y="5" width="2" height="2" fill="#8d929c"/><rect x="9" y="5" width="2" height="2" fill="#8d929c"/><rect x="1" y="9" width="2" height="2" fill="#8d929c"/><rect x="5" y="9" width="2" height="2" fill="#8d929c"/><rect x="9" y="9" width="2" height="2" fill="#8d929c"/></svg></div><svg style="left:4.5px;top:5.1px;width:38px;height:38px" viewBox="0 0 38 38"><defs><linearGradient id="ab" x1="0" y1="0" x2="0" y2="1"><stop offset="0" stop-color="#ffffff"/><stop offset=".47" stop-color="#e6e6e7"/><stop offset=".5" stop-color="#c6c8ca"/><stop offset=".62" stop-color="#dcdddf"/><stop offset="1" stop-color="#ffffff"/></linearGradient><linearGradient id="abv" x1="0" y1="0" x2="0" y2="1"><stop offset="0" stop-color="#f4681c"/><stop offset="1" stop-color="#e01c28"/></linearGradient></defs><circle cx="19" cy="19" r="18.300" fill="#7d8186"/><circle cx="19" cy="19" r="17.300" fill="#fafafa"/><circle cx="19" cy="19" r="16.200" fill="url(#ab)"/><g fill="none" stroke-linecap="round"><path d="M7.700 19.900C6.400 15.600 11 12.700 16.600 12.600" stroke="#f26a20" stroke-width="1.700"/><path d="M16.500 12.600C15.200 17.700 14.200 24 13.900 29.300" stroke="url(#abv)" stroke-width="2.700"/><path d="M13.900 29.600C18.500 23.500 25.500 15.700 27.900 9.300" stroke="url(#abv)" stroke-width="1.600"/><path d="M21.700 19.800C20.800 23 19.900 27 19.900 29.300" stroke="#141e94" stroke-width="2.300"/><path d="M19.600 20.600l2.300-.9M19.900 29.500l2-.8" stroke="#141e94" stroke-width="1.100"/><path d="M30 19.800C28.500 18.200 25.900 18.900 25.800 21.300C25.700 23.800 28.300 24.800 28 27.300C27.700 29.900 24.800 30.300 23.500 28.700" stroke="#a02ca6" stroke-width="1.900"/></g><circle cx="22.900" cy="14.400" r="1.200" fill="#141e94"/></svg><div id="frameborder"></div></div></body></html>
